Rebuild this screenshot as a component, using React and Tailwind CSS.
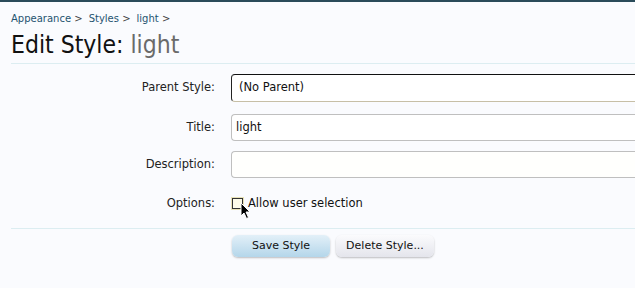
import React from 'react';

const Row = ({ label, children, className = '' }) => (
  <div className={`flex items-center ${className}`}>
    <label className="w-[216px] shrink-0 text-right pr-[1px] text-[#222]">{label}</label>
    <div className="ml-[15px] flex-1">{children}</div>
  </div>
);

export default function App() {
  return (
    <div className="w-[635px] h-[288px] overflow-hidden bg-[#fafbfe] border-t-2 border-[#2a4b5a] text-[11.5px] font-['DejaVu_Sans',sans-serif]">
      {/* Breadcrumb */}
      <div className="pl-[11px] pt-[10px] flex gap-[6px] text-[10px] text-[#1f5470] leading-[14px]">
        <span>Appearance <span className="text-[#444]">&gt;</span></span>
        <span>Styles <span className="text-[#444]">&gt;</span></span>
        <span>light <span className="text-[#444]">&gt;</span></span>
      </div>

      <h1 className="pl-[11px] mt-[4px] text-[24.5px] leading-[30px] text-[#111] font-['DejaVu_Sans_Condensed','DejaVu_Sans',sans-serif]">
        Edit Style: <span className="text-[#6a6a6a]">light</span>
      </h1>

      <div className="ml-[11px] mt-[3px] border-t border-[#dcedf1]" />

      <form className="pt-[10px]">
        <Row label="Parent Style:">
          <div className="h-[28px] border border-[#c7bfa6] border-t-[#111] border-l-[#222] border-r-0 rounded-l-[4px] bg-white flex items-center pl-[7px] text-[#111]">
            (No Parent)
          </div>
        </Row>

        <Row label="Title:" className="mt-[12px]">
          <div className="h-[27px] border border-[#bfbfbf] border-r-0 rounded-l-[4px] bg-white flex items-center pl-[4px] text-[#111]">
            light
          </div>
        </Row>

        <Row label="Description:" className="mt-[10px]">
          <div className="h-[27px] border border-[#bfbfbf] border-r-0 rounded-l-[4px] bg-[#fffffd]" />
        </Row>

        <Row label="Options:" className="mt-[17px]">
          <div className="relative flex items-center h-[16px]">
            <span className="w-[11px] h-[11px] ml-[1px] border border-[#333] bg-[#fdfbe8] shadow-[0_0_0_1px_#e8e2b8]" />
            <span className="ml-[5px] text-[#111]">Allow user selection</span>
            <svg className="absolute left-[9px] top-[6px]" width="12" height="18" viewBox="0 0 12 18">
              <path d="M1 1 L1 14 L4 11 L6.5 16.5 L8.5 15.5 L6 10 L10 10 Z" fill="#000" stroke="#fff" strokeWidth="1" />
            </svg>
          </div>
        </Row>

        <div className="ml-[11px] mt-[16px] border-t border-[#dcedf1]" />

        <div className="flex gap-[6px] pl-[232px] pt-[6px] text-[11px]">
          <button type="button" className="w-[98px] h-[22px] rounded-[6px] bg-gradient-to-b from-[#e3f0f8] to-[#b4d6ea] shadow-[0_1px_2px_rgba(0,0,0,0.25)] text-[#111]">
            Save Style
          </button>
          <button type="button" className="w-[98px] h-[22px] rounded-[6px] bg-gradient-to-b from-[#fbfbfd] to-[#e4e5ec] shadow-[0_1px_2px_rgba(0,0,0,0.25)] text-[#111]">
            Delete Style...
          </button>
        </div>
      </form>
    </div>
  );
}
